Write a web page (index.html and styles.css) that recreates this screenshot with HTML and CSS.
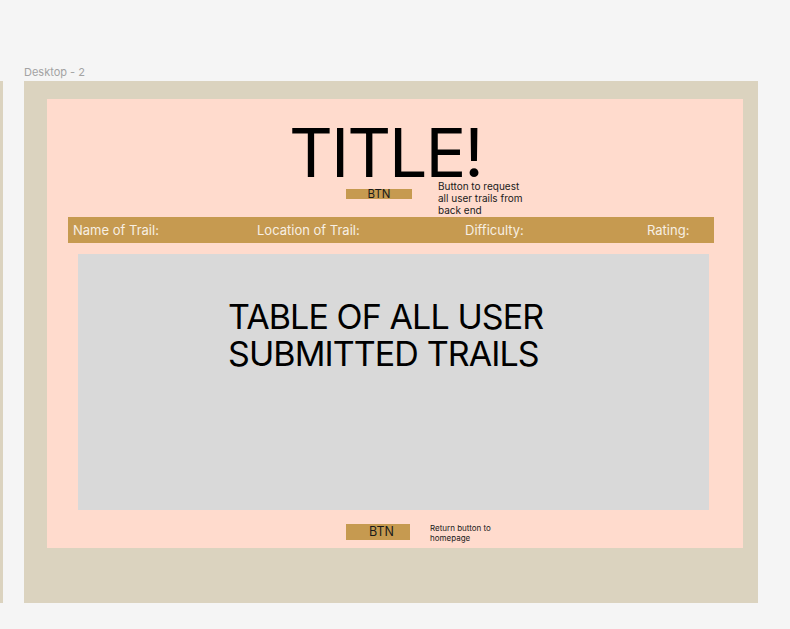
FILE: index.html
```html
<!DOCTYPE html>
<html>
<head>
<meta charset="utf-8">
<link rel="stylesheet" href="styles.css">
</head>
<body>
<div class="canvas">
  <div class="strip"></div>
  <div class="frame-label">Desktop - 2</div>
  <div class="frame">
    <div class="page">
      <div class="title">TITLE!</div>
      <div class="btn-row top-row">
        <div class="btn btn-small">BTN</div>
        <div class="note note-top">Button to request<br>all user trails from<br>back end</div>
      </div>
      <div class="header-bar">
        <span>Name of Trail:</span>
        <span>Location of Trail:</span>
        <span>Difficulty:</span>
        <span>Rating:</span>
      </div>
      <div class="table-box">
        <div class="table-text">TABLE OF ALL USER<br>SUBMITTED TRAILS</div>
      </div>
      <div class="btn-row bottom-row">
        <div class="btn btn-big">BTN</div>
        <div class="note note-bottom">Return button to<br>homepage</div>
      </div>
    </div>
  </div>
</div>
</body>
</html>
```
FILE: styles.css
```css
html, body {
  margin: 0;
  padding: 0;
  background: #f5f5f5;
  font-family: Inter, "Noto Sans", sans-serif;
}
.canvas {
  position: relative;
  width: 790px;
  height: 629px;
  overflow: hidden;
}
.strip {
  position: absolute;
  left: 0;
  top: 81px;
  width: 3px;
  height: 522px;
  background: #dbd3bf;
}
.frame-label {
  position: absolute;
  left: 24px;
  top: 65px;
  font-size: 11px;
  color: #a3a3a3;
  line-height: 14px;
}
.frame {
  position: absolute;
  left: 24px;
  top: 81px;
  width: 734px;
  height: 522px;
  background: #dbd3bf;
  box-sizing: border-box;
  padding: 18px 15px 0 23px;
}
.page {
  width: 696px;
  height: 449px;
  background: #ffdbcd;
  display: flex;
  flex-direction: column;
  align-items: flex-start;
}
.title {
  margin-top: 26px;
  margin-left: 242px;
  height: 54px;
  font-size: 68px;
  line-height: 54px;
  letter-spacing: -2px;
  color: #000;
  font-weight: 400;
}
.btn-row {
  display: flex;
  align-items: flex-start;
}
.top-row {
  height: 38px;
  margin-left: 299px;
}
.btn {
  background: #c69a50;
  color: #1a1a1a;
  text-align: center;
}
.btn-small {
  margin-top: 10px;
  width: 66px;
  height: 10px;
  font-size: 11.5px;
  line-height: 10px;
}
.note {
  color: #1a1a1a;
}
.note-top {
  margin-left: 26px;
  margin-top: 1px;
  font-size: 10px;
  line-height: 12px;
}
.header-bar {
  margin-left: 21px;
  width: 646px;
  height: 26px;
  background: #c69a50;
  color: #f7efe3;
  font-size: 13px;
  display: grid;
  grid-template-columns: 184px 208px 182px 1fr;
  align-items: center;
  box-sizing: border-box;
  padding-left: 5px;
}
.table-box {
  margin-top: 11px;
  margin-left: 31px;
  width: 631px;
  height: 256px;
  background: #d9d9d9;
  box-sizing: border-box;
  padding: 44px 0 0 150px;
}
.table-text {
  font-size: 34px;
  line-height: 37px;
  letter-spacing: -0.9px;
  color: #000;
}
.bottom-row {
  margin-top: 14px;
  margin-left: 299px;
}
.btn-big {
  width: 64px;
  height: 16px;
  box-sizing: border-box;
  padding-left: 7px;
  font-size: 12.5px;
  line-height: 16px;
}
.note-bottom {
  margin-left: 20px;
  font-size: 8px;
  line-height: 10px;
  margin-top: -1px;
}
```
